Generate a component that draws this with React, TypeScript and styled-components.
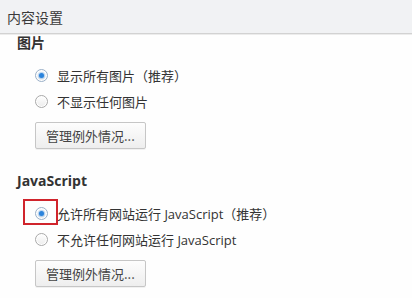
import React from "react";
import styled, { createGlobalStyle } from "styled-components";

const Global = createGlobalStyle`
  html, body { margin: 0; padding: 0; background: #fefefe; }
  body {
    font-family: "Open Sans", "Noto Sans CJK SC", sans-serif;
    color: #333;
    width: 412px;
    height: 298px;
    overflow: hidden;
    text-spacing-trim: space-all;
  }
`;

const Page = styled.div`
  display: flex;
  flex-direction: column;
  width: 412px;
  height: 298px;
  background: #fefefe;
  overflow: hidden;
`;

const Header = styled.div`
  height: 33px;
  flex: none;
  display: flex;
  align-items: center;
  padding-left: 7px;
  background: #f1f2f4;
  border-bottom: 1px solid #d2d2d2;
  font-family: "Noto Sans CJK SC", sans-serif;
  font-size: 14px;
  color: #3a3a3a;
  box-shadow: 0 1px 0 #ececec;
`;

const Content = styled.div`
  display: flex;
  flex-direction: column;
  gap: 23px;
  padding-left: 17px;
`;

const Section = styled.section`
  display: flex;
  flex-direction: column;
`;

const Heading = styled.div`
  height: 17px;
  line-height: 17px;
  font-size: 14px;
  font-weight: 700;
  color: #333;
  font-family: "Open Sans", "Noto Sans CJK SC", sans-serif;
`;

const Body = styled.div`
  display: flex;
  flex-direction: column;
  align-items: flex-start;
  margin-top: 11px;
  padding-left: 18px;
`;

const Row = styled.label`
  position: relative;
  display: flex;
  align-items: center;
  height: 26.5px;
  gap: 9px;
  font-size: 13px;
  color: #333;
  white-space: nowrap;
`;

const Circle = styled.span<{ $checked?: boolean }>`
  position: relative;
  flex: none;
  width: 11px;
  height: 11px;
  border-radius: 50%;
  border: 1px solid ${(p) => (p.$checked ? "#9ab0c8" : "#a9a9a9")};
  background: linear-gradient(#ffffff, #ececec);
  box-shadow: inset 0 0 0 1px #fff;
  &::after {
    content: "";
    display: ${(p) => (p.$checked ? "block" : "none")};
    position: absolute;
    left: 3px;
    top: 3px;
    width: 5px;
    height: 5px;
    border-radius: 50%;
    background: #2b83dc;
    box-shadow: 0 0 1px 1px rgba(43, 131, 220, 0.35);
  }
`;

const Highlight = styled.span`
  position: absolute;
  left: -12px;
  top: -1px;
  width: 31px;
  height: 22px;
  border: 2px solid #d0242c;
  pointer-events: none;
`;

const Button = styled.button`
  margin-top: 7px;
  height: 27px;
  padding: 0 10px;
  font-family: "Noto Sans CJK SC", sans-serif;
  font-size: 13px;
  color: #444;
  background: linear-gradient(#fdfdfd, #eeeeee);
  border: 1px solid #c6c6c6;
  border-radius: 2px;
  box-shadow: 0 1px 0 rgba(0, 0, 0, 0.05);
`;

type Opt = { label: string; checked?: boolean; highlight?: boolean };

const SettingSection: React.FC<{ title: string; options: Opt[] }> = ({ title, options }) => (
  <Section>
    <Heading>{title}</Heading>
    <Body>
      {options.map((o) => (
        <Row key={o.label}>
          {o.highlight && <Highlight />}
          <Circle $checked={o.checked} />
          <span>{o.label}</span>
        </Row>
      ))}
      <Button>管理例外情况...</Button>
    </Body>
  </Section>
);

export default function App() {
  return (
    <Page>
      <Global />
      <Header>内容设置</Header>
      <Content>
        <SettingSection
          title="图片"
          options={[
            { label: "显示所有图片（推荐）", checked: true },
            { label: "不显示任何图片" },
          ]}
        />
        <SettingSection
          title="JavaScript"
          options={[
            { label: "允许所有网站运行 JavaScript（推荐）", checked: true, highlight: true },
            { label: "不允许任何网站运行 JavaScript" },
          ]}
        />
      </Content>
    </Page>
  );
}
